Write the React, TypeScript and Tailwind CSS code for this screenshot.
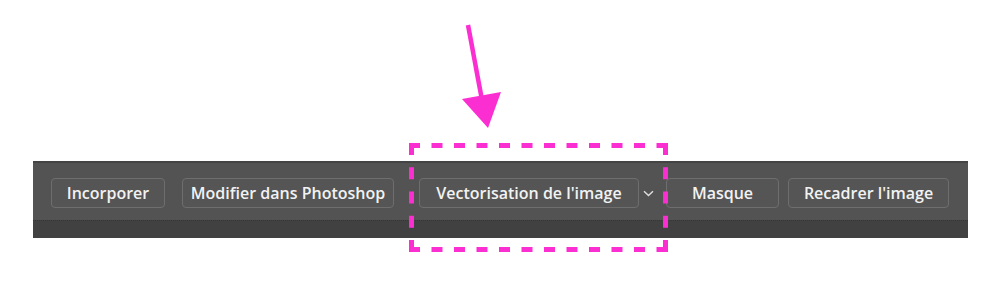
import React from 'react';

const ToolButton: React.FC<{ label: string; className?: string }> = ({ label, className = '' }) => (
  <button
    className={`h-[30px] rounded-[4px] border border-[#6e6e6e] bg-[#555555] text-[16px] font-semibold text-[#f2f2f2] leading-none flex items-center justify-center ${className}`}
    style={{ fontFamily: '"Open Sans", "DejaVu Sans", sans-serif' }}
  >
    {label}
  </button>
);

const PINK = '#fb2fd1';

const App: React.FC = () => {
  return (
    <div className="relative w-[1002px] h-[287px] bg-white overflow-hidden">
      {/* Toolbar */}
      <div className="pt-[161px] pl-[33px]">
        <div className="w-[935px]">
          <div className="h-[59px] bg-[#535353] border-t-2 border-[#444444] flex items-start pt-[15px] pl-[18px]">
            <ToolButton label="Incorporer" className="w-[114px]" />
            <ToolButton label="Modifier dans Photoshop" className="w-[212px] ml-[17px]" />
            <ToolButton label="Vectorisation de l'image" className="w-[220px] ml-[25px]" />
            <div className="w-[27px] h-[30px] flex items-center justify-start pl-[4px]">
              <svg width="11" height="7" viewBox="0 0 11 7" fill="none">
                <path d="M1 1.2 L5.5 5.5 L10 1.2" stroke="#e0e0e0" strokeWidth="1.4" />
              </svg>
            </div>
            <ToolButton label="Masque" className="w-[113px]" />
            <ToolButton label="Recadrer l'image" className="w-[161px] ml-[9px]" />
          </div>
          <div className="h-[18px] bg-[#414141] border-t border-dotted border-[#363636]" />
        </div>
      </div>

      {/* Annotation: arrow + dashed highlight */}
      <svg className="absolute left-0 top-0 pointer-events-none" width="1002" height="287">
        <line x1="468" y1="25" x2="482" y2="100" stroke={PINK} strokeWidth="4.5" />
        <polygon points="462,99 501,92 488,128" fill={PINK} />
        <g stroke={PINK} strokeWidth="5" fill="none">
          <line x1="409" y1="145.5" x2="668" y2="145.5" strokeDasharray="11 11.5" />
          <line x1="409" y1="249.5" x2="668" y2="249.5" strokeDasharray="11 11.5" />
          <line x1="411.5" y1="143" x2="411.5" y2="252" strokeDasharray="12 12.25" />
          <line x1="665.5" y1="143" x2="665.5" y2="252" strokeDasharray="12 12.25" />
        </g>
      </svg>
    </div>
  );
};

export default App;
